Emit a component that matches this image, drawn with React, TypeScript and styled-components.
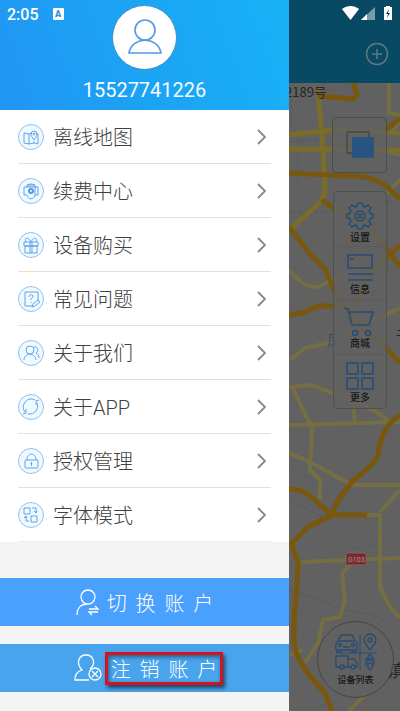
import React from "react";
import styled, { createGlobalStyle } from "styled-components";

const GlobalStyle = createGlobalStyle`
  * { box-sizing: border-box; }
  body { margin: 0; font-family: Roboto, "Noto Sans CJK SC", sans-serif; }
  button { font: inherit; border: 0; padding: 0; background: none; cursor: pointer; }
`;

const Screen = styled.div`
  position: relative;
  display: flex;
  min-height: 100vh;
  overflow: hidden;
  background: #f4f4f4;
`;

const StatusBar = styled.div`
  position: absolute;
  z-index: 3;
  top: 0;
  left: 0;
  right: 0;
  height: 28px;
  padding: 0 6px 0 7px;
  display: flex;
  align-items: center;
  color: #fff;
  pointer-events: none;
`;

const Clock = styled.time`
  font-size: 16px;
  font-weight: 500;
  margin-right: 14px;
`;

const InputBadge = styled.span`
  width: 11px;
  height: 12px;
  border-radius: 1px;
  background: #fff;
  color: #2a8fd8;
  font-size: 9px;
  line-height: 12px;
  font-weight: 900;
  text-align: center;
`;

const StatusIcons = styled.div`
  margin-left: auto;
  display: flex;
`;

const Drawer = styled.aside`
  position: relative;
  z-index: 2;
  flex: 289 1 0;
  min-width: 0;
  display: flex;
  flex-direction: column;
  background: #f4f4f4;
`;

const Profile = styled.header`
  height: 110px;
  padding-top: 5px;
  display: flex;
  flex-direction: column;
  align-items: center;
  background: linear-gradient(70deg, #2196f3 0%, #1ba4f4 50%, #18b1f6 100%);
`;

const Avatar = styled.div`
  width: 65px;
  height: 65px;
  flex: none;
  border-radius: 50%;
  border: 1px solid #3c8fc4;
  background: #fff;
  display: flex;
  align-items: center;
  justify-content: center;
`;

const Phone = styled.div`
  margin-top: 8px;
  font-size: 20px;
  line-height: 24px;
  color: #f4fbff;
`;

const Menu = styled.nav`
  padding: 0 18px;
  background: #fff;
`;

const MenuRow = styled.button`
  width: 100%;
  height: 54px;
  display: flex;
  align-items: center;
  gap: 9px;
  border-bottom: 1px solid #e0e0e0;
  color: #404040;
  font-size: 20px;
  font-weight: 300;
  text-align: left;

  svg { flex: none; }
  &:last-child { border-bottom-color: #eee; }
`;

const RowLabel = styled.span`
  flex: 1;
  padding-top: 2px;
  line-height: 28px;
`;

const Actions = styled.div`
  padding: 36px 0 18px;
  display: grid;
  gap: 18px;
`;

const ActionButton = styled.button<{ $tone: string; $gap: number; $indent?: number }>`
  height: 48px;
  padding-left: ${(p) => p.$indent ?? 0}px;
  display: flex;
  align-items: center;
  justify-content: center;
  gap: ${(p) => p.$gap}px;
  background: ${(p) => p.$tone};
  color: #fff;
  font-size: 20px;
  font-weight: 300;
`;

const ActionText = styled.span<{ $marked?: boolean }>`
  white-space: pre;
  font-family: "Noto Sans CJK SC", sans-serif;
  line-height: 27px;
  ${(p) =>
    p.$marked &&
    `
    padding: 0 3px;
    border: 3px solid #d3141c;
    box-shadow: 2px 3px 4px rgba(0, 0, 0, .6), inset 1px 2px 4px rgba(0, 0, 0, .45);
  `}
`;

const MapSide = styled.main`
  position: relative;
  flex: 111 1 0;
  min-width: 0;
  display: flex;
  flex-direction: column;
  align-items: flex-end;
  background: #616161;
`;

const MapHeader = styled.header`
  position: relative;
  z-index: 1;
  align-self: stretch;
  height: 83px;
  padding: 25px 11px 0 0;
  display: flex;
  justify-content: flex-end;
  align-items: center;
  background: #084a64;
`;

const AddButton = styled.button`
  display: flex;
`;

const MapArea = styled.section`
  position: relative;
  flex: 1;
  align-self: stretch;
  display: flex;
  flex-direction: column;
  align-items: flex-end;
  padding: 34px 13px 13px 0;
  overflow: hidden;
`;

const MapDrawing = styled.svg`
  position: absolute;
  top: 0;
  left: 0;
  width: 100%;
  height: 100%;
`;

const LayerButton = styled.button`
  position: relative;
  width: 55px;
  height: 56px;
  display: flex;
  align-items: center;
  justify-content: center;
  border: 1px solid #4c4c4c;
  border-radius: 4px;
  background: rgba(98, 98, 98, .82);
`;

const Tools = styled.div`
  position: relative;
  width: 54px;
  margin-top: 18px;
  border: 1px solid #505050;
  border-radius: 4px;
  background: rgba(98, 98, 98, .82);
`;

const Tool = styled.button`
  width: 100%;
  height: 54px;
  padding-top: 2px;
  display: flex;
  flex-direction: column;
  align-items: center;
  justify-content: center;
  color: #161616;
  font-size: 10px;
  font-weight: 500;
  line-height: 14px;

  &:first-child { padding-top: 8px; }
  & + & { border-top: 1px solid #5a5a5a; }
`;

const DeviceButton = styled.button`
  position: relative;
  width: 77px;
  height: 77px;
  margin: auto -7px 0 0;
  border: 1px solid #454545;
  border-radius: 50%;
  background: rgba(98, 98, 98, .85);
  display: flex;
  flex-direction: column;
  align-items: center;
  justify-content: center;
  gap: 2px;
  color: #161616;
  font-size: 9px;
  font-weight: 500;
  line-height: 14px;
`;

const rowIcons: Record<string, React.ReactNode> = {
  map: (
    <>
      <path d="M6 9l5 1v10l-5-1zM11 10l3-1M11 20l5-1 4 1V10l-2-1M16 17v2" />
      <path d="M16 16c-2-3-3-4-3-6a3 3 0 016 0c0 2-1 3-3 6z" />
      <circle cx="16" cy="10" r="1" />
    </>
  ),
  renew: (
    <>
      <path d="M9 9H6v8h3M17 9h3v8h-3M8 9c1-4 9-4 10 0M10 6v3M12 6v3M14 6v3M16 6v3M9 17c1 5 7 5 8 0" />
      <circle cx="13" cy="13" r="2" strokeWidth="2" />
      <path d="M9 9h8v8" />
    </>
  ),
  gift: (
    <path d="M6 10h14v4H6zM7 14h12v7H7zM12 10v11M14 10v11M13 10C10 4 6 6 8 10M13 10c3-6 7-4 5 0" />
  ),
  question: (
    <>
      <path d="M15 20H7V6h13v9M14 21l1-3 5-4 2 2-5 4z" />
      <path d="M11 11c0-3 5-3 4 0-1 1-2 1-2 3M13 16v1" />
    </>
  ),
  people: (
    <>
      <circle cx="12" cy="10" r="4" />
      <path d="M6 20c0-7 11-8 12 0M16 7c4-1 5 5 2 6 2 1 3 3 3 5" />
    </>
  ),
  refresh: (
    <>
      <path d="M7 18A8 8 0 0117 6M19 9a8 8 0 01-9 11" />
      <path d="M18 11V7l3-1M8 15v4l-3 1" />
    </>
  ),
  lock: (
    <>
      <rect x="7" y="12" width="13" height="8" rx="1" />
      <path d="M9 12c0-8 9-8 9 0M13.500 15v3" />
      <circle cx="13.500" cy="15" r=".6" />
    </>
  ),
  font: (
    <path d="M6 6h6v6H6zM13 14h6v6h-6zM14 6h4v5M16 9l2 2 1-2M8 14v5h3M6 16l2-2 1 2" />
  ),
};

const RowIcon = ({ name }: { name: string }) => (
  <svg width="26" height="26" viewBox="0 0 26 26" fill="none" stroke="#5299e6" strokeWidth=".9">
    <circle cx="13" cy="13" r="12.500" fill="#effaff" stroke="#7aaeea" strokeWidth=".8" />
    {rowIcons[name]}
  </svg>
);

const Chevron = () => (
  <svg width="14" height="18" viewBox="0 0 14 18" fill="none" stroke="#888" strokeWidth="1.800">
    <path d="M1 2l7 7-7 7" />
  </svg>
);

const rows = [
  ["map", "离线地图"],
  ["renew", "续费中心"],
  ["gift", "设备购买"],
  ["question", "常见问题"],
  ["people", "关于我们"],
  ["refresh", "关于APP"],
  ["lock", "授权管理"],
  ["font", "字体模式"],
];

const toolIcons: [string, React.ReactNode][] = [
  [
    "设置",
    <>
      <path d="M12 2h4l1 3 2 1 3-2 3 3-2 3 1 2 3 1v4l-3 1-1 2 2 3-3 3-3-2-2 1-1 3h-4l-1-3-2-1-3 2-3-3 2-3-1-2-3-1v-4l3-1 1-2-2-3 3-3 3 2 2-1z" />
      <circle cx="14" cy="15" r="5" />
      <circle cx="14" cy="15" r="2" />
    </>,
  ],
  ["信息", <path d="M2 2h24v13H2zM4 6h4M2 21h25M2 27h25" />],
  [
    "商城",
    <>
      <path d="M-2 1l4 1 4 16h17l4-13H3" />
      <circle cx="9" cy="26" r="2.500" />
      <circle cx="22" cy="26" r="2.500" />
    </>,
  ],
  ["更多", <path d="M1 2h11v11H1zM16 2h11v11H16zM1 17h11v11H1zM16 17h11v11H16z" />],
];

const RoadMap = () => (
  <MapDrawing viewBox="289 83 111 628" preserveAspectRatio="xMinYMin slice" aria-hidden="true">
    <g fill="none" stroke="#555a61" strokeWidth="1" strokeDasharray="6 2">
      <path d="M289 142l30-2M298 137v50M289 212h38M291 88v40M289 465l55 35 26 35M289 500l40 20M289 591c20 3 40 15 60 20s20 0 35 10l16 8M350 550l50-12M388 200v70h12M388 200l12 4" />
    </g>
    <g fill="none" stroke="#746e42" strokeWidth="4" strokeLinejoin="round">
      <path d="M389 83v30l11 2M289 270c10 12 20 18 29 17l14-7 30-10M290 360l15-12 23-5 30-15 42-20M289 387l22-2 21 8 30 12 10 5M293 388l10 22 9 17-2 43 10 10v20M289 425l111-3M353 400l2 22M366 405l22 15M289 453l23 10 40 22h48M367 515h13v75M400 490l-20 22M298 562l102-4M380 585c3 12 11 25 20 33M352 563l-10 10 3 27-5 17-17 3-5 23-13 20M365 695l-17 17M400 180l-14 14M289 655l14-5" />
      <path d="M390 133l10-10M332 137l68 18" strokeWidth="3" />
    </g>
    <g fill="none" stroke="#7b6d29" strokeWidth="5" strokeLinejoin="round">
      <path d="M318 87l2 26 3 37 2 40-3 10-32 30M289 135l43-5 68 3M289 149l111 1" />
    </g>
    <g fill="none" stroke="#79580d" strokeWidth="5" strokeLinejoin="round">
      <path d="M318 96l35 3 4-4-4-13M400 118l-16 13M289 173l79 4 17 8 15 14M322 200l14 10 30 12 19 25 15 20M400 245l-30 28-15 33M289 227l21 27 15 15 10 23 20 30 30 25 15 16M289 315l16-3 13-6h22M400 415c-18 12-20 28-22 39s-19 20-26 28-17 22-20 33M289 489c17 0 21 8 29 14l14 12h35M332 515l-24 12-17 17 7 17c0 30-8 75-2 91 6 18 18 28 29 41l7 18" />
    </g>
    <g fontFamily="Noto Sans CJK SC, sans-serif" fill="#252525">
      <text x="285" y="97" fontSize="13">2189号</text>
      <text x="327" y="345" fontSize="14" fill="#244f82">凤</text>
      <text x="396" y="341" fontSize="14">于</text>
      <text x="388" y="677" fontSize="17">滇</text>
    </g>
    <rect x="346" y="553" width="20" height="12" rx="1" fill="#792a2c" stroke="#806263" />
    <text x="348" y="562" fontSize="7" fontFamily="Roboto, sans-serif" fill="#a69999">G103</text>
  </MapDrawing>
);

export default function App() {
  return (
    <Screen>
      <GlobalStyle />
      <StatusBar>
        <Clock>2:05</Clock>
        <InputBadge>A</InputBadge>
        <StatusIcons>
          <svg width="52" height="16" viewBox="0 0 52 16" fill="#fff">
            <path d="M0 3C5-1 12-1 17 3L8.500 14z" />
            <path d="M33 1v13H19z" opacity=".45" />
            <path d="M25 8v6h-6z" />
            <path d="M44 0h4v1h2v13h-8V1h2z" />
            <path d="M47 3l-3 5h2l-1 4 3-5h-2z" fill="#073f58" />
          </svg>
        </StatusIcons>
      </StatusBar>

      <Drawer>
        <Profile>
          <Avatar>
            <svg width="36" height="38" viewBox="0 0 36 38" fill="none" stroke="#5598e6" strokeWidth="1.600">
              <circle cx="18" cy="11" r="10" />
              <path d="M2 34c3-17 29-17 32 0z" />
            </svg>
          </Avatar>
          <Phone>15527741226</Phone>
        </Profile>
        <Menu>
          {rows.map(([icon, label]) => (
            <MenuRow key={icon}>
              <RowIcon name={icon} />
              <RowLabel>{label}</RowLabel>
              <Chevron />
            </MenuRow>
          ))}
        </Menu>
        <Actions>
          <ActionButton $tone="#49a1fd" $gap={7}>
            <svg width="24" height="28" viewBox="0 0 24 28" fill="none" stroke="#fff" strokeWidth="1.300">
              <circle cx="12" cy="9" r="7" />
              <path d="M1 27c0-7 4-11 10-11M13 21h9l-3-3M22 24h-9l3 3" />
            </svg>
            <ActionText>切  换  账  户</ActionText>
          </ActionButton>
          <ActionButton $tone="#49a4ee" $gap={3} $indent={8}>
            <svg width="28" height="28" viewBox="0 0 28 28" fill="none" stroke="#fff" strokeWidth="1.300">
              <path d="M15 26H1c0-6 2-8 7-10C2 10 4 1 12 1s10 9 4 14" />
              <circle cx="21" cy="20" r="6" />
              <path d="M18 17l6 6M24 17l-6 6" />
            </svg>
            <ActionText $marked>注  销  账  户</ActionText>
          </ActionButton>
        </Actions>
      </Drawer>

      <MapSide>
        <MapHeader>
          <AddButton aria-label="添加">
            <svg width="24" height="24" viewBox="0 0 24 24" fill="none" stroke="#62777f" strokeWidth="1.500">
              <circle cx="12" cy="12" r="10.500" />
              <path d="M12 7v10M7 12h10" />
            </svg>
          </AddButton>
        </MapHeader>
        <MapArea>
          <RoadMap />
          <LayerButton aria-label="图层">
            <svg width="28" height="28" viewBox="0 0 28 28">
              <path d="M1 1h22v21H1z" fill="none" stroke="#333b45" />
              <path d="M6 6h22v21H6z" fill="#28547f" />
            </svg>
          </LayerButton>
          <Tools>
            {toolIcons.map(([label, icon]) => (
              <Tool key={label}>
                <svg width="28" height="30" viewBox="0 0 28 30" overflow="visible" fill="none" stroke="#264e75" strokeWidth="1.600">
                  {icon}
                </svg>
                {label}
              </Tool>
            ))}
          </Tools>
          <DeviceButton>
            <svg width="42" height="38" viewBox="0 0 42 38" fill="none" stroke="#264e75" strokeWidth="1.400">
              <path d="M25 1v36M1 20h41" strokeWidth="1" />
              <path d="M3 8l3-6h11l3 6 2 2v7H1v-7zM3 8h17M2 17v2h4v-2M17 17v2h4v-2M8 14h7" />
              <circle cx="5" cy="12" r="1.500" />
              <circle cx="18" cy="12" r="1.500" />
              <path d="M35 17c-4-6-6-7-6-10a6 6 0 0112 0c0 3-2 4-6 10z" />
              <circle cx="35" cy="7" r="2" />
              <path d="M5 34H1V23h12v11H9M13 26h6l3 4v4h-2M16 34h-3" />
              <circle cx="7" cy="34" r="2" />
              <circle cx="18" cy="34" r="2" />
              <path d="M30 26h3M37 26h3M31 33c-1-4 1-6 4-6s5 2 4 6M33 30h4v5l-2 2-2-2z" />
              <circle cx="35" cy="24" r="2" />
            </svg>
            设备列表
          </DeviceButton>
        </MapArea>
      </MapSide>
    </Screen>
  );
}
